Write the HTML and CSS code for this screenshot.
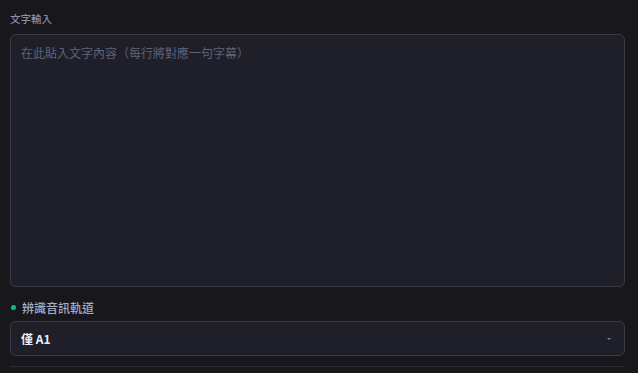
FILE: index.html
```html
<!DOCTYPE html>
<html lang="zh-Hant">
  <head>
    <meta charset="UTF-8" />
    <meta name="viewport" content="width=device-width, initial-scale=1.0" />
    <title>字幕</title>
    <link rel="stylesheet" href="styles.css">
  </head>
  <body>
    <div class="panel">
      <label class="field-label" for="text">文字輸入</label>
      <textarea id="text" class="text-input" placeholder="在此貼入文字內容（每行將對應一句字幕）"></textarea>
      <div class="track-label"><span class="dot"></span>辨識音訊軌道</div>
      <div class="select">
        <span class="select-value">僅 A1</span>
        <span class="caret"></span>
      </div>
      <hr class="divider" />
    </div>
  </body>
</html>
```

FILE: styles.css
```css
html,
body {
  margin: 0;
  background-color: #18171c;
}
body {
  font-family: 'Noto Sans CJK TC', 'Noto Sans', sans-serif;
  color: #c8cad6;
}
.panel {
  width: 615px;
  padding: 12px 0 0 10px;
}
.field-label {
  display: block;
  font-size: 10.5px;
  font-weight: 500;
  line-height: 14px;
  color: #8b8fa6;
  margin-bottom: 8px;
}
.text-input {
  display: block;
  box-sizing: border-box;
  width: 615px;
  height: 253px;
  margin: 0;
  padding: 9px 10px;
  resize: none;
  border: 1px solid #3a3a45;
  border-radius: 6px;
  background-color: #1f1f29;
  color: #c8cad6;
  font-family: inherit;
  font-size: 12px;
  line-height: 18px;
  outline: none;
}
.text-input::placeholder {
  color: #5e6378;
}
.track-label {
  display: flex;
  align-items: center;
  margin-top: 10px;
  height: 20px;
  font-size: 12px;
  font-weight: 500;
  color: #a9adc0;
}
.dot {
  width: 5px;
  height: 5px;
  margin: 0 6px 0 1px;
  border-radius: 50%;
  background-color: #10b98a;
}
.select {
  box-sizing: border-box;
  display: flex;
  align-items: center;
  justify-content: space-between;
  height: 35px;
  margin-top: 4px;
  padding: 0 13px 0 10px;
  border: 1px solid #3a3a45;
  border-radius: 6px;
  background-color: #1f1f29;
}
.select-value {
  font-size: 12px;
  font-weight: bold;
  color: #eceef5;
}
.caret {
  width: 0;
  height: 0;
  border-left: 2px solid transparent;
  border-right: 2px solid transparent;
  border-top: 2px solid #7c8199;
}
.divider {
  margin: 10px 0 0;
  border: 0;
  border-top: 1px solid #2c2c34;
}
```
